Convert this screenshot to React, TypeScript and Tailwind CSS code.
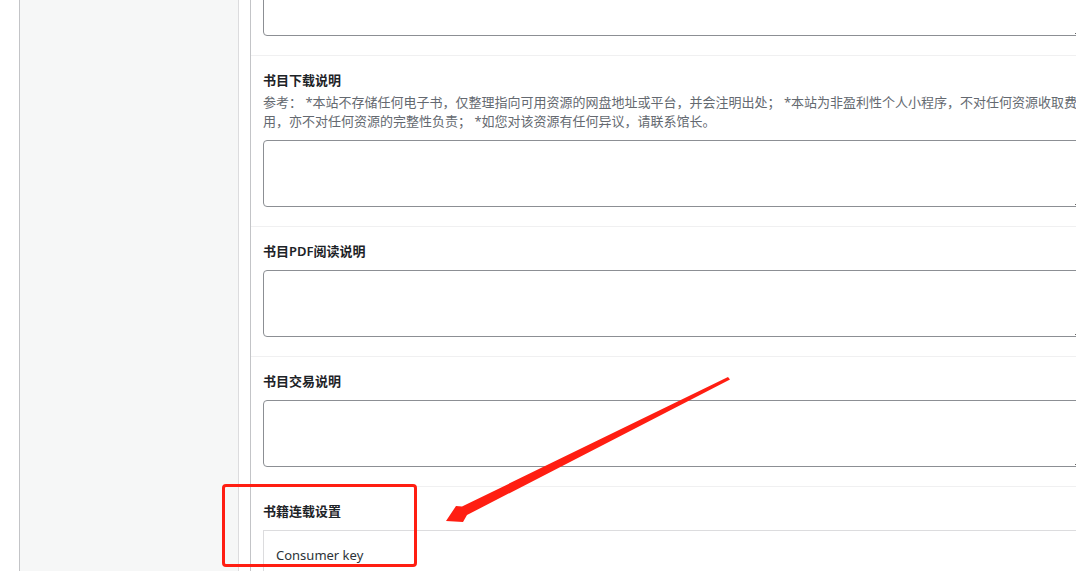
import React from "react";

type Field = {
  label: string;
  description?: string;
};

const fields: Field[] = [
  {
    label: "书目下载说明",
    description:
      "参考： *本站不存储任何电子书，仅整理指向可用资源的网盘地址或平台，并会注明出处； *本站为非盈利性个人小程序，不对任何资源收取费用，亦不对任何资源的完整性负责； *如您对该资源有任何异议，请联系馆长。",
  },
  { label: "书目PDF阅读说明" },
  { label: "书目交易说明" },
];

function FieldRow({ label, description }: Field) {
  return (
    <div className="border-t border-[#f0f0f1] pl-3 pt-[15px] pb-[19px]">
      <h3 className="text-[13px] font-semibold leading-[18px] text-[#1d2327]">
        {label}
      </h3>
      {description && (
        <p className="mt-1 w-[815px] text-[13px] leading-[19px] text-[#646970]">
          {description}
        </p>
      )}
      <textarea
        className={`block h-[67px] w-[821px] rounded border border-[#8c8f94] bg-white ${
          description ? "mt-[9px]" : "mt-[10px]"
        }`}
      />
    </div>
  );
}

export default function App() {
  return (
    <div className="relative flex h-[571px] w-full overflow-hidden bg-white font-['Noto_Sans','Noto_Sans_CJK_SC',sans-serif]">
      <div className="w-[19px] shrink-0" />
      <aside className="w-[220px] shrink-0 border-x border-l-[#c3c4c7] border-r-[#dcdcde] bg-[#f6f7f7]" />
      <div className="w-[11px] shrink-0" />

      <main className="min-w-0 flex-1 border-l border-[#c3c4c7]">
        {/* tail of the field above, scrolled out of view */}
        <div className="-mt-[31px] pl-3 pb-[19px]">
          <textarea className="block h-[67px] w-[821px] rounded border border-[#8c8f94] bg-white" />
        </div>

        {fields.map((f) => (
          <FieldRow key={f.label} {...f} />
        ))}

        <div className="border-t border-[#f0f0f1] pl-3 pt-[15px]">
          <h3 className="text-[13px] font-semibold leading-[18px] text-[#1d2327]">
            书籍连载设置
          </h3>
          <div className="mt-[10px] h-[80px] w-[821px] border border-[#dcdcde] px-3 pt-[15px]">
            <p className="text-[13px] leading-[18px] text-[#2c3338]">
              Consumer key
            </p>
          </div>
        </div>
      </main>

      {/* annotation overlay */}
      <div className="pointer-events-none absolute left-[222px] top-[484px] h-[83px] w-[195px] rounded-[4px] border-[3px] border-[#ff1e12]" />
      <svg
        className="pointer-events-none absolute left-0 top-0"
        width="1076"
        height="571"
        viewBox="0 0 1076 571"
      >
        <polygon
          points="446,521 456,506 462,506.5 728,377 730,379.5 467,515 463,522"
          fill="#ff1e12"
        />
      </svg>
    </div>
  );
}
